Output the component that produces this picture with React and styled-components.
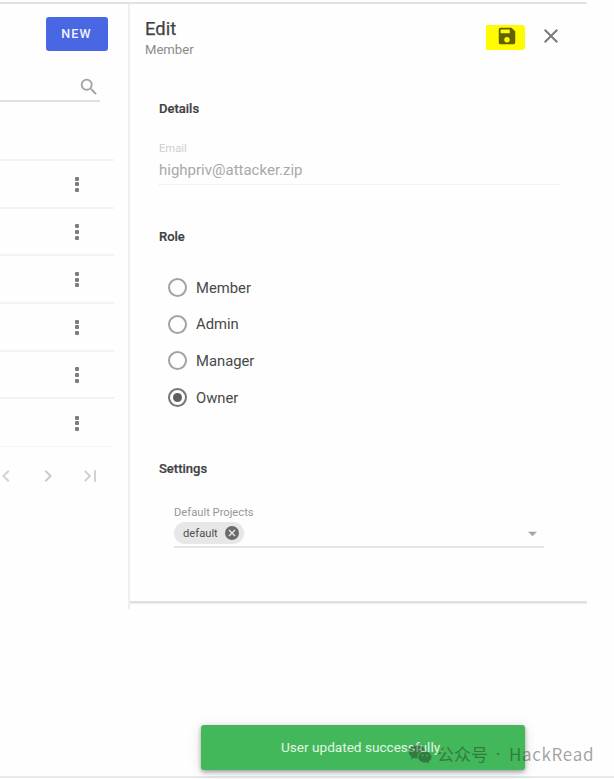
import React from "react";
import styled, { createGlobalStyle } from "styled-components";

const Global = createGlobalStyle`
  * { box-sizing: border-box; }
  body { margin: 0; background: #fefefe; font-family: Roboto, "Liberation Sans", sans-serif; }
`;

const Page = styled.div`
  position: relative;
  width: 614px;
  height: 779px;
  overflow: hidden;
  display: flex;
  flex-direction: column;
  background: #fefefe;
`;

const Workspace = styled.main`
  display: flex;
  align-items: flex-start;
  width: 587px;
  height: 607px;
  margin-top: 2px;
  border-top: 2px solid #e3e3e3;
`;

const ListPane = styled.section`
  width: 130px;
  height: 605px;
  display: flex;
  flex-direction: column;
  border-right: 2px solid #efefef;
`;

const NewButton = styled.button`
  width: 62px;
  height: 34px;
  margin: 13px 0 0 45.5px;
  padding: 0;
  border: 0;
  border-radius: 3px;
  background: #4967e2;
  color: #f4f6ff;
  font: 500 12.5px/34px Roboto, sans-serif;
  letter-spacing: 1.2px;
`;

const SearchField = styled.div`
  display: flex;
  justify-content: flex-end;
  width: 100px;
  height: 29px;
  margin-top: 22px;
  padding: 3px 0 0 0;
  border-bottom: 2px solid #e0e0e0;
`;

const Rows = styled.div`
  width: 114px;
  margin-top: 57px;
  border-top: 2px solid #f3f3f3;
`;

const Row = styled.div`
  display: flex;
  align-items: center;
  height: 47.7px;
  padding-left: 75.4px;
  border-bottom: ${(p) => (p.$last ? "1px solid #f4f4f4" : "2px solid #f3f3f3")};
`;

const Dots = styled.div`
  display: grid;
  gap: 1.7px;
  margin-top: 1px;
  i { width: 4px; height: 4px; border-radius: 1px; background: #7c7e84; }
`;

const Pager = styled.div`
  display: flex;
  justify-content: space-between;
  width: 96px;
  margin-top: 23px;
`;

const Panel = styled.section`
  width: 457px;
  height: 599px;
  display: flex;
  flex-direction: column;
  border-bottom: 2px solid #dfdfdf;
  box-shadow: 0 1px 1px #eee;
  clip-path: inset(0 0 -4px 0);
`;

const PanelHeader = styled.header`
  display: flex;
  height: 96px;
  padding: 12px 29px 0 15px;
`;

const Heading = styled.div`
  flex: 1;
`;

const Title = styled.h1`
  margin: 0;
  color: #444;
  font: 400 18.4px/26px Roboto, sans-serif;
  -webkit-text-stroke: 0.25px;
`;

const Subtitle = styled.div`
  margin-top: -1px;
  color: #8a8a8a;
  font-size: 13.1px;
  line-height: 18px;
`;

const SaveButton = styled.button`
  display: flex;
  justify-content: center;
  width: 39px;
  height: 25px;
  margin: 9px 19px 0 0;
  padding: 0 0 0 3px;
  border: 0;
  border-radius: 1px 3px 3px 1px;
  background: #fffb00;
`;

const CloseButton = styled.button`
  display: flex;
  width: 14px;
  height: 14px;
  margin-top: 13px;
  padding: 0;
  border: 0;
  background: none;
`;

const SectionTitle = styled.h2`
  margin: 0 0 0 29px;
  color: #404040;
  font: 500 13px/18px Roboto, sans-serif;
  -webkit-text-stroke: 0.2px;
`;

const EmailField = styled.div`
  width: 400px;
  height: 43px;
  margin: 24px 0 43px 29px;
  border-bottom: 1px dotted #e8e8e8;
`;

const EmailLabel = styled.div`
  color: #cecece;
  font-size: 11.2px;
  line-height: 14px;
`;

const EmailValue = styled.div`
  margin-top: 5px;
  color: #a8a8a8;
  font-size: 15px;
  line-height: 18px;
`;

const RoleList = styled.div`
  display: flex;
  flex-direction: column;
  margin: 23.2px 0 44px 38px;
`;

const Role = styled.div`
  display: flex;
  align-items: center;
  gap: 9px;
  height: 36.7px;
  color: #484848;
  font-size: 14.8px;
`;

const Radio = styled.span`
  display: grid;
  place-items: center;
  width: 19px;
  height: 19px;
  border: 2px solid ${(p) => (p.$on ? "#747474" : "#a2a2a2")};
  border-radius: 50%;
  &::after {
    content: "";
    width: 9px;
    height: 9px;
    border-radius: 50%;
    background: ${(p) => (p.$on ? "#5e5e5e" : "transparent")};
  }
`;

const SelectField = styled.div`
  width: 370px;
  height: 43px;
  margin: 27px 0 0 44px;
  border-bottom: 2px solid #e4e4e4;
`;

const SelectLabel = styled.div`
  color: #979797;
  font-size: 11.2px;
  line-height: 15px;
`;

const SelectValue = styled.div`
  display: flex;
  align-items: center;
  justify-content: space-between;
  height: 22px;
  margin-top: 2.5px;
  padding-right: 7px;
`;

const Chip = styled.div`
  display: flex;
  align-items: center;
  justify-content: space-between;
  width: 70px;
  height: 22px;
  padding: 0 5.5px 0 9px;
  border-radius: 11px;
  background: #e7e7e7;
  color: #505050;
  font-size: 11.2px;
`;

const Footer = styled.footer`
  display: flex;
  flex-direction: column;
  align-items: flex-start;
  height: 53px;
  margin-top: 116px;
  padding-left: 201px;
  border-bottom: 2px solid #e9e9e9;
`;

const Toast = styled.div`
  flex: none;
  width: 324px;
  height: 45px;
  border-radius: 3px;
  background: #43b85a;
  box-shadow: 0 2px 4px rgba(0, 0, 0, 0.32), 0 2px 14px rgba(0, 0, 0, 0.13);
  color: #e0f6e4;
  font-size: 13.6px;
  line-height: 44px;
  padding-left: 80px;
  white-space: nowrap;
`;

const Watermark = styled.div`
  position: absolute;
  left: 408px;
  top: 741px;
  display: flex;
  align-items: center;
  height: 26px;
  opacity: 0.4;
  color: #1c1c1c;
  font: 400 17px/26px "Noto Sans CJK SC", sans-serif;
  white-space: nowrap;
`;

const Han = styled.span`
  width: 54px;
  margin-left: 5px;
`;

const Dot = styled.span`
  display: flex;
  justify-content: center;
  width: 14px;
  margin-right: 4px;
  font-family: "Noto Sans", sans-serif;
`;

const Latin = styled.span`
  letter-spacing: 0.65px;
`;

const Icon = ({ size = 24, color, d, box = "0 0 24 24" }) => (
  <svg width={size} height={size} viewBox={box} fill={color} aria-hidden="true">
    <path d={d} />
  </svg>
);

const paths = {
  search: "M15.5 14h-.79l-.28-.27A6.47 6.47 0 0 0 16 9.5 6.5 6.5 0 1 0 9.5 16c1.61 0 3.09-.59 4.23-1.57l.27.28v.79l5 4.99L20.49 19zM9.5 14a4.5 4.5 0 1 1 0-9 4.5 4.5 0 0 1 0 9z",
  prev: "M15.41 7.41 14 6l-6 6 6 6 1.41-1.41L10.83 12z",
  next: "M10 6 8.59 7.41 13.17 12l-4.58 4.59L10 18l6-6z",
  last: "M5.59 7.41 10.18 12l-4.59 4.59L7 18l6-6-6-6zM16 6h2v12h-2z",
  save: "M17 3H5a2 2 0 0 0-2 2v14c0 1.1.9 2 2 2h14c1.1 0 2-.9 2-2V7zm-5 16a3 3 0 1 1 0-6 3 3 0 0 1 0 6zm3-10H5V5h10z",
  close: "M19 6.41 17.59 5 12 10.59 6.41 5 5 6.41 10.59 12 5 17.59 6.41 19 12 13.41 17.59 19 19 17.59 13.41 12z",
  cancel: "M12 2a10 10 0 1 0 0 20 10 10 0 0 0 0-20zm5 13.59L15.59 17 12 13.41 8.41 17 7 15.59 10.59 12 7 8.41 8.41 7 12 10.59 15.59 7 17 8.41 13.41 12z",
};

const ChatLogo = () => (
  <svg width="24" height="20" viewBox="0 0 24 20" fill="currentColor" fillRule="evenodd" aria-hidden="true">
    <path d="M9 1C4.3 1 .7 4 .7 7.8c0 2.1 1.1 4 3 5.2L3 15.5l2.8-1.4c1 .3 2 .5 3.2.5h.6a6 6 0 0 1-.3-1.7c0-3.5 3.3-6.2 7.4-6.2h.6C16.600 3.400 13.200 1 9 1zM6.200 4.500a1.100 1.100 0 1 1 0 2.200 1.100 1.100 0 0 1 0-2.200zm5.600 0a1.100 1.100 0 1 1 0 2.200 1.100 1.100 0 0 1 0-2.200z" />
    <path d="M23.500 13.100c0-3.100-3-5.500-6.700-5.500s-6.700 2.400-6.700 5.500 3 5.500 6.700 5.500c.8 0 1.600-.1 2.300-.3l2.200 1.200-.6-2c1.700-1 2.800-2.600 2.800-4.400zm-8.900-2.600a.9.900 0 1 1 0 1.800.9.900 0 0 1 0-1.800zm4.500 0a.9.900 0 1 1 0 1.800.9.900 0 0 1 0-1.800z" />
  </svg>
);

const roles = [
  { name: "Member" },
  { name: "Admin" },
  { name: "Manager" },
  { name: "Owner", on: true },
];

export default function App() {
  return (
    <Page>
      <Global />
      <Workspace>
        <ListPane>
          <NewButton>NEW</NewButton>
          <SearchField>
            <Icon size={22} color="#a2a2a2" d={paths.search} />
          </SearchField>
          <Rows>
            {[0, 1, 2, 3, 4, 5].map((n) => (
              <Row key={n} $last={n === 5}>
                <Dots><i /><i /><i /></Dots>
              </Row>
            ))}
          </Rows>
          <Pager>
            <Icon size={12} box="6 6 12 12" color="#d2d2d2" d={paths.prev} />
            <Icon size={12} box="6 6 12 12" color="#cacaca" d={paths.next} />
            <Icon size={12} box="5.5 6 12.500 12" color="#cfcfcf" d={paths.last} />
          </Pager>
        </ListPane>
        <Panel>
          <PanelHeader>
            <Heading>
              <Title>Edit</Title>
              <Subtitle>Member</Subtitle>
            </Heading>
            <SaveButton aria-label="Save">
              <Icon size={22} color="#626000" d={paths.save} />
            </SaveButton>
            <CloseButton aria-label="Close">
              <Icon size={14} box="5 5 14 14" color="#7a7a7a" d={paths.close} />
            </CloseButton>
          </PanelHeader>
          <SectionTitle>Details</SectionTitle>
          <EmailField>
            <EmailLabel>Email</EmailLabel>
            <EmailValue>highpriv@attacker.zip</EmailValue>
          </EmailField>
          <SectionTitle>Role</SectionTitle>
          <RoleList>
            {roles.map((r) => (
              <Role key={r.name}>
                <Radio $on={r.on} />
                {r.name}
              </Role>
            ))}
          </RoleList>
          <SectionTitle>Settings</SectionTitle>
          <SelectField>
            <SelectLabel>Default Projects</SelectLabel>
            <SelectValue>
              <Chip>
                default
                <Icon size={14} box="2 2 20 20" color="#6a6a6a" d={paths.cancel} />
              </Chip>
              <Icon size={9} box="7 7 10 10" color="#a6a6a6" d="M7 10l5 5 5-5z" />
            </SelectValue>
          </SelectField>
        </Panel>
      </Workspace>
      <Footer>
        <Toast>User updated successfully.</Toast>
      </Footer>
      <Watermark>
        <ChatLogo />
        <Han>公众号</Han>
        <Dot>·</Dot>
        <Latin>HackRead</Latin>
      </Watermark>
    </Page>
  );
}
